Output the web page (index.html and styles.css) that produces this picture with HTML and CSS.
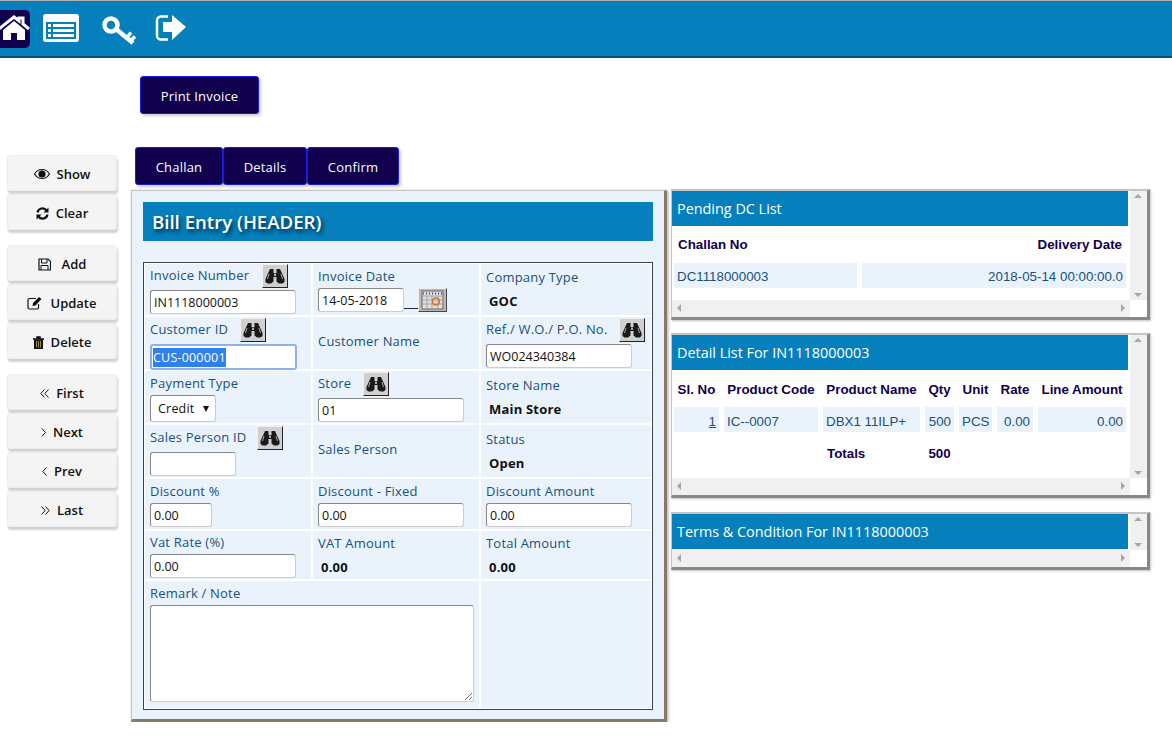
FILE: index.html
```html
<!DOCTYPE html>
<html lang="en">
  <head>
    <meta charset="UTF-8" />
    <title>Bill Entry</title>
    <link rel="stylesheet" href="styles.css">
  </head>
  <body>
    <svg class="sprite" width="0" height="0">
      <symbol id="bino" viewBox="0 0 20 16">
        <path d="M5 1 H8.500 V5 H11.500 V1 H15 L19.500 11 V14 L17.500 15.500 H14 L11.500 13.500 V9 H8.500 V13.500 L6 15.500 H2.500 L0.500 14 V11 Z" fill="#1a1a1a"/>
        <path d="M4 6 L2.500 11 M16 6 L17.500 11 M9.500 5.500 V8 M10.500 5.500 V8" stroke="#aaa" stroke-width="1" fill="none"/>
      </symbol>
    </svg>

    <header class="topbar">
      <a class="nav-icon active">
        <svg width="30" height="28" viewBox="0 0 30 28"><path d="M-1 14 L14 2 L19 6 V3 H23 V9 L29 14" fill="none" stroke="#fff" stroke-width="3"/><path d="M3 15 L14 6 L25 15 V25 H17 V18 H11 V25 H3 Z" fill="#fff"/></svg>
      </a>
      <a class="nav-icon list">
        <svg width="36" height="28" viewBox="0 0 36 28"><rect x="0" y="0" width="36" height="28" rx="3" fill="#fff"/><rect x="3" y="8" width="30" height="17" fill="#0580bc"/><path d="M5 10h3v3h-3zM5 15h3v3h-3zM5 20h3v3h-3zM10 10h21v3h-21zM10 15h21v3h-21zM10 20h21v3h-21z" fill="#fff"/></svg>
      </a>
      <a class="nav-icon key">
        <svg width="34" height="34" viewBox="0 0 34 34"><circle cx="9" cy="9" r="6.500" fill="none" stroke="#fff" stroke-width="4.500"/><path d="M14 13 L31 27" stroke="#fff" stroke-width="4.500" fill="none"/><path d="M25 21.500 L29 16.500 M29 24.500 L33 20.500" stroke="#fff" stroke-width="3.500" fill="none"/></svg>
      </a>
      <a class="nav-icon exit">
        <svg width="32" height="28" viewBox="0 0 32 28"><path d="M13 3.500 H6 A4 4 0 0 0 2 7.500 V22.500 A4 4 0 0 0 6 26.500 H13" fill="none" stroke="#fff" stroke-width="2.500"/><path d="M8 9 H17 V2 L31 14 L17 27 V19 H8 Z" fill="#fff"/></svg>
      </a>
    </header>

    <div class="print-row">
      <button class="dark-btn print-btn" type="button">Print Invoice</button>
    </div>

    <div class="page">
      <aside class="sidebar">
        <div class="btn-group">
          <button class="side-btn" type="button"><svg width="16" height="12" viewBox="0 0 16 12"><path d="M0.500 6 C4 0 12 0 15.500 6 C12 12 4 12 0.500 6 Z" fill="none" stroke="#111" stroke-width="1.200"/><circle cx="8" cy="6" r="3.600" fill="#111"/></svg>Show</button>
          <button class="side-btn" type="button"><svg width="13" height="13" viewBox="0 0 13 13"><path d="M1.500 5.500 A5 5 0 0 1 10.500 3.500 M11.500 7.500 A5 5 0 0 1 2.500 9.500" fill="none" stroke="#111" stroke-width="2.200"/><path d="M12.500 0.500 V5.500 H7.500 Z M0.500 12.500 V7.500 H5.500 Z" fill="#111"/></svg>Clear</button>
        </div>
        <div class="btn-group">
          <button class="side-btn wide" type="button"><svg width="13" height="13" viewBox="0 0 13 13"><path d="M1 1 H10 L12.500 3.500 V12 H1 Z" fill="none" stroke="#111" stroke-width="1.200"/><path d="M3.500 1 V5 H9 V1 M3 12 V7.500 H10 V12" fill="none" stroke="#111"/></svg>Add</button>
          <button class="side-btn" type="button"><svg width="16" height="14" viewBox="0 0 16 14"><path d="M9 2.500 H2.500 A1.500 1.500 0 0 0 1 4 V11.500 A1.500 1.500 0 0 0 2.500 13 H10 A1.500 1.500 0 0 0 11.500 11.500 V8" fill="none" stroke="#111" stroke-width="1.200"/><path d="M6 7 L12 1 L14.500 3 L8.500 9.500 L5.500 10 Z" fill="#111"/></svg>Update</button>
          <button class="side-btn" type="button"><svg width="11" height="13" viewBox="0 0 11 13"><path d="M0 2.500 H11 V3.500 H0 Z M3.500 2.500 V0.500 H7.500 V2.500" fill="#111" stroke="#111" stroke-width="0.600"/><path d="M1 3.500 H10 V13 H1 Z" fill="#111"/><path d="M3.500 5 V11.500 M5.500 5 V11.500 M7.500 5 V11.500" stroke="#c9a55c" stroke-width="0.800"/></svg>Delete</button>
        </div>
        <div class="btn-group">
          <button class="side-btn" type="button"><svg class="chev" width="9" height="9" viewBox="0 0 9 9"><path d="M4.500 0.500 L0.800 4.500 L4.500 8.500 M8.500 0.500 L4.800 4.500 L8.500 8.500" /></svg>First</button>
          <button class="side-btn" type="button"><svg class="chev" width="5" height="9" viewBox="0 0 5 9"><path d="M0.800 0.500 L4.500 4.500 L0.800 8.500" /></svg>Next</button>
          <button class="side-btn" type="button"><svg class="chev" width="5" height="9" viewBox="0 0 5 9"><path d="M4.500 0.500 L0.800 4.500 L4.500 8.500" /></svg>Prev</button>
          <button class="side-btn" type="button"><svg class="chev" width="9" height="9" viewBox="0 0 9 9"><path d="M0.500 0.500 L4.200 4.500 L0.500 8.500 M4.500 0.500 L8.200 4.500 L4.500 8.500" /></svg>Last</button>
        </div>
      </aside>

      <div class="content">
        <nav class="tabs">
          <button class="dark-btn tab" type="button">Challan</button>
          <button class="dark-btn tab" type="button">Details</button>
          <button class="dark-btn tab" type="button">Confirm</button>
        </nav>

        <div class="columns">
          <section class="form-panel">
            <h2 class="form-title">Bill Entry (HEADER)</h2>
            <div class="form-grid">
              <div class="cell">
                <div class="label-row"><label>Invoice Number</label><button class="find-btn" type="button"><svg width="20" height="16"><use href="#bino"/></svg></button></div>
                <input class="field w-146" type="text" value="IN1118000003" />
              </div>
              <div class="cell pad-3">
                <label>Invoice Date</label>
                <div class="date-row">
                  <input class="field w-86" type="text" value="14-05-2018" />
                  <span class="date-line"></span>
                  <button class="cal-btn" type="button"><svg width="25" height="20" viewBox="0 0 25 20"><rect x="2" y="1" width="21" height="18" fill="#ddd" stroke="#666"/><path d="M2 6h21M2 10h21M2 14h21M7 6v13M12 6v13M18 6v13" stroke="#999" stroke-width="0.800"/><path d="M3 3.500h19" stroke="#44a" stroke-dasharray="1 2" stroke-width="2"/><circle cx="16" cy="11.500" r="3.500" fill="none" stroke="#e07020" stroke-width="1.600"/></svg></button>
                </div>
              </div>
              <div class="cell pad-4">
                <label>Company Type</label>
                <div class="value">GOC</div>
              </div>

              <div class="cell pad-1">
                <div class="label-row tight"><label>Customer ID</label><button class="find-btn" type="button"><svg width="20" height="16"><use href="#bino"/></svg></button></div>
                <div class="field w-146 focused"><span class="selected">CUS-000001</span></div>
              </div>
              <div class="cell center"><label>Customer Name</label></div>
              <div class="cell pad-1">
                <div class="label-row spread"><label>Ref./ W.O./ P.O. No.</label><button class="find-btn" type="button"><svg width="20" height="16"><use href="#bino"/></svg></button></div>
                <input class="field w-146" type="text" value="WO024340384" />
              </div>

              <div class="cell pad-3">
                <label>Payment Type</label>
                <div class="field select-box"><span>Credit</span><span class="caret"></span></div>
              </div>
              <div class="cell pad-1">
                <div class="label-row tight"><label>Store</label><button class="find-btn" type="button"><svg width="20" height="16"><use href="#bino"/></svg></button></div>
                <input class="field w-146" type="text" value="01" />
              </div>
              <div class="cell pad-5">
                <label>Store Name</label>
                <div class="value">Main Store</div>
              </div>

              <div class="cell pad-1">
                <div class="label-row tighter"><label>Sales Person ID</label><button class="find-btn" type="button"><svg width="20" height="16"><use href="#bino"/></svg></button></div>
                <input class="field w-86" type="text" />
              </div>
              <div class="cell center"><label>Sales Person</label></div>
              <div class="cell pad-5">
                <label>Status</label>
                <div class="value">Open</div>
              </div>

              <div class="cell pad-3">
                <label>Discount %</label>
                <input class="field w-62" type="text" value="0.00" />
              </div>
              <div class="cell pad-3">
                <label>Discount - Fixed</label>
                <input class="field w-146" type="text" value="0.00" />
              </div>
              <div class="cell pad-3">
                <label>Discount Amount</label>
                <input class="field w-146" type="text" value="0.00" />
              </div>

              <div class="cell pad-2">
                <label>Vat Rate (%)</label>
                <input class="field w-146" type="text" value="0.00" />
              </div>
              <div class="cell pad-3">
                <label>VAT Amount</label>
                <div class="value">0.00</div>
              </div>
              <div class="cell pad-3">
                <label>Total Amount</label>
                <div class="value">0.00</div>
              </div>

              <div class="cell pad-3 span-2">
                <label>Remark / Note</label>
                <textarea class="field note"></textarea>
              </div>
              <div class="cell"></div>
            </div>
          </section>

          <div class="side-panels">
            <section class="list-panel h-pending">
              <div class="list-body">
                <h3 class="list-title">Pending DC List</h3>
                <table class="list-table pending">
                  <tr><th class="left">Challan No</th><th class="right">Delivery Date</th></tr>
                  <tr><td>DC1118000003</td><td class="right">2018-05-14 00:00:00.0</td></tr>
                </table>
              </div>
              <div class="vbar"><span class="arr up"></span><span class="arr down"></span></div>
              <div class="hbar"><span class="arr lf"></span><span class="arr rt"></span></div>
            </section>

            <section class="list-panel h-detail">
              <div class="list-body">
                <h3 class="list-title">Detail List For IN1118000003</h3>
                <table class="list-table detail">
                  <tr><th>Sl. No</th><th>Product Code</th><th>Product Name</th><th>Qty</th><th>Unit</th><th>Rate</th><th>Line Amount</th></tr>
                  <tr><td class="right"><a class="row-link">1</a></td><td>IC--0007</td><td>DBX1 11ILP+</td><td class="right">500</td><td>PCS</td><td class="right">0.00</td><td class="right">0.00</td></tr>
                  <tr class="totals"><th></th><th></th><th class="left">Totals</th><th>500</th><th></th><th></th><th></th></tr>
                </table>
              </div>
              <div class="vbar"><span class="arr up"></span><span class="arr down"></span></div>
              <div class="hbar"><span class="arr lf"></span><span class="arr rt"></span></div>
            </section>

            <section class="list-panel h-terms">
              <div class="list-body">
                <h3 class="list-title">Terms &amp; Condition For IN1118000003</h3>
              </div>
              <div class="vbar"><span class="arr up"></span><span class="arr down"></span></div>
              <div class="hbar"><span class="arr lf"></span><span class="arr rt"></span></div>
            </section>
          </div>
        </div>
      </div>
    </div>
  </body>
</html>
```

FILE: styles.css
```css
* {
  box-sizing: border-box;
}

body {
  margin: 0;
  background: #fff;
  font-family: "Open Sans", "Liberation Sans", sans-serif;
  font-size: 13px;
  color: #111;
  overflow: hidden;
}

button {
  font-family: inherit;
  cursor: pointer;
}

.sprite {
  position: absolute;
}

/* top bar */
.topbar {
  height: 58px;
  display: flex;
  align-items: flex-start;
  padding-top: 9px;
  background: #0580bc;
  border-top: 1px solid #b4b4b4;
  border-bottom: 2px solid #03507a;
}

.nav-icon {
  display: flex;
  align-items: center;
  justify-content: center;
  height: 38px;
}

.nav-icon.active {
  width: 30px;
  background: #10004e;
  border-radius: 0 5px 5px 0;
}

.nav-icon.list {
  margin: -1px 0 0 13px;
}

.nav-icon.key {
  margin: 4px 0 0 23px;
}

.nav-icon.exit {
  margin: -2px 0 0 19px;
}

.dark-btn {
  background: #10004e;
  color: #fff;
  border: 1px solid #1a1ae6;
  border-radius: 3px;
  font-size: 13px;
  letter-spacing: 0.2px;
  box-shadow: 2px 2px 3px rgba(0, 0, 0, 0.2);
}

.print-row {
  padding: 18px 0 0 140px;
}

.print-btn {
  width: 119px;
  height: 38px;
  padding-top: 3px;
}

/* left buttons */
.page {
  display: flex;
  margin-top: 33px;
}

.sidebar {
  width: 135px;
  flex: none;
  padding: 8px 0 0 7px;
}

.btn-group {
  display: flex;
  flex-direction: column;
  gap: 3px;
  margin-bottom: 15px;
}

.side-btn {
  width: 110px;
  height: 36px;
  display: flex;
  align-items: center;
  justify-content: center;
  gap: 7px;
  padding: 2px 0 0;
  background: #f4f4f4;
  border: 1px solid #ececec;
  border-radius: 3px;
  font-size: 13px;
  font-weight: 600;
  color: #111;
  box-shadow: 1px 3px 2px rgba(0, 0, 0, 0.18);
}

.side-btn.wide {
  gap: 11px;
}

.chev {
  fill: none;
  stroke: #111;
  stroke-width: 1;
}

/* tabs and columns */
.tabs {
  display: flex;
}

.tab {
  height: 38px;
  padding: 1px 0 0;
}

.tab:nth-child(1) {
  width: 88px;
}

.tab:nth-child(2) {
  width: 84px;
}

.tab:nth-child(3) {
  width: 92px;
}

.columns {
  display: flex;
  align-items: flex-start;
  margin: 5px 0 0 -4px;
}

/* form panel */
.form-panel {
  width: 536px;
  height: 532px;
  padding: 11px 11px 0;
  background: #eaf3fb;
  border-top: 1px solid #c4c4c4;
  border-left: 1px solid #c4c4c4;
  border-right: 3px solid #857a6c;
  border-bottom: 3px solid #857a6c;
  box-shadow: 1px 1px 3px rgba(0, 0, 0, 0.35);
}

.form-title {
  height: 39px;
  margin: 0 0 21px;
  padding-left: 9px;
  background: #0580bc;
  color: #fff;
  font-size: 18.600px;
  font-weight: 600;
  line-height: 40px;
  text-shadow: 2px 3px 4px #023;
}

.form-grid {
  display: grid;
  grid-template-columns: 166px 166px minmax(0, 1fr);
  grid-template-rows: 51px 52px 52px 52px 50px 48px 127px;
  gap: 2px;
  height: 448px;
  padding: 1px;
  background: #fff;
  border: 1px solid #444;
}

.cell {
  background: #eaf3fb;
  padding: 0 6px 0 5px;
  color: #18507f;
  letter-spacing: 0.2px;
}

.cell.pad-1 {
  padding-top: 1px;
}

.cell.pad-2 {
  padding-top: 2px;
}

.cell.pad-3 {
  padding-top: 3px;
}

.cell.pad-4 {
  padding-top: 4px;
}

.cell.pad-5 {
  padding-top: 5px;
}

.cell.center {
  display: flex;
  align-items: center;
  padding-bottom: 4px;
}

.span-2 {
  grid-column: span 2;
}

label {
  display: block;
  line-height: 18px;
  height: 18px;
  white-space: nowrap;
}

.label-row {
  display: flex;
  align-items: center;
  gap: 13px;
  height: 24px;
  margin-bottom: 2px;
}

.label-row.tight {
  gap: 12px;
}

.label-row.tighter {
  gap: 11px;
}

.label-row.spread {
  gap: 0;
  justify-content: space-between;
}

.label-row label {
  margin-top: -2px;
}

.find-btn {
  width: 26px;
  height: 24px;
  padding: 0;
  display: flex;
  align-items: center;
  justify-content: center;
  background: #d0d0d0;
  border: 1px solid;
  border-color: #f0f0f0 #222 #222 #f0f0f0;
}

.field {
  display: block;
  height: 24px;
  padding: 0 3px;
  background: #fff;
  border: 1px solid;
  border-color: #888 #ccc #ccc #888;
  border-radius: 3px;
  font-family: "Open Sans", "Liberation Sans", sans-serif;
  font-size: 12.500px;
  color: #111;
  outline: none;
  margin-top: 3px;
}

.label-row + .field {
  margin-top: 0;
}

.w-146 {
  width: 146px;
}

.w-86 {
  width: 86px;
}

.w-62 {
  width: 62px;
}

.field.focused {
  display: flex;
  align-items: center;
  width: 147px;
  height: 26px;
  border: 2px solid #8db1ea;
  padding: 0 1px;
}

.selected {
  background: #2f80ed;
  color: #fff;
  line-height: 19px;
}

.date-row {
  display: flex;
  align-items: flex-end;
}

.date-line {
  width: 14px;
  height: 1px;
  background: #224;
  margin-bottom: 3px;
}

.cal-btn {
  width: 29px;
  height: 24px;
  padding: 0;
  display: flex;
  align-items: center;
  justify-content: center;
  background: #bbb;
  border: 1px solid;
  border-color: #eee #444 #444 #eee;
}

.value {
  padding: 6px 0 0 3px;
  font-weight: 700;
  color: #111;
}

.select-box {
  width: 66px;
  height: 27px;
  display: flex;
  align-items: center;
  justify-content: space-between;
  padding: 0 6px 0 7px;
}

.caret {
  border-top: 6px solid #111;
  border-left: 3.500px solid transparent;
  border-right: 3.500px solid transparent;
}

.note {
  width: 324px;
  height: 97px;
  resize: both;
}

/* right panels */
.side-panels {
  display: flex;
  flex-direction: column;
  gap: 13px;
  width: 479px;
  margin: -1px 0 0 4px;
}

.list-panel {
  display: grid;
  grid-template-columns: 1fr 17px;
  grid-template-rows: 1fr 17px;
  background: #fff;
  border-top: 2px solid #c4c4c4;
  border-left: 1px solid #c4c4c4;
  border-right: 3px solid #888;
  border-bottom: 3px solid #888;
  box-shadow: 1px 1px 2px rgba(0, 0, 0, 0.25);
}

.h-pending {
  height: 131px;
}

.h-detail {
  height: 165px;
}

.h-terms {
  height: 58px;
  margin-top: 1px;
}

.list-body {
  min-width: 0;
  overflow: hidden;
}

.list-title {
  width: 456px;
  height: 35px;
  margin: 0;
  padding-left: 5px;
  background: #0580bc;
  color: #fff;
  font-size: 14.400px;
  font-weight: 400;
  line-height: 35px;
}

.vbar,
.hbar {
  position: relative;
  background: #f0f0f0;
}

.arr {
  position: absolute;
  border: 4px solid transparent;
}

.arr.up {
  top: 3px;
  left: 4px;
  border-top: 0;
  border-bottom-color: #a6a6a6;
}

.arr.down {
  bottom: 3px;
  left: 4px;
  border-bottom: 0;
  border-top-color: #a6a6a6;
}

.arr.lf {
  left: 5px;
  top: 4px;
  border-left: 0;
  border-right-color: #a6a6a6;
}

.arr.rt {
  right: 5px;
  top: 4px;
  border-right: 0;
  border-left-color: #a6a6a6;
}

.list-table {
  width: 462px;
  margin: 0 0 0 -3px;
  border-collapse: separate;
  border-spacing: 5px 0;
  font-family: "Liberation Sans", Arial, sans-serif;
  font-size: 13.330px;
  table-layout: fixed;
}

.list-table th {
  height: 37px;
  color: #10004e;
  font-weight: 700;
  text-align: center;
  padding: 0 4px;
  white-space: nowrap;
}

.detail th {
  padding: 1px 0 0;
}

.list-table td {
  height: 25px;
  padding: 2px 3px 0;
  background: #eaf3fb;
  color: #18507f;
  white-space: nowrap;
}

.detail td {
  padding-top: 3px;
}

.list-table .left {
  text-align: left;
}

.list-table .right {
  text-align: right;
}

.pending th:first-child {
  width: 183px;
}

.detail th:nth-child(1) {
  width: 45px;
}

.detail th:nth-child(2) {
  width: 94px;
}

.detail th:nth-child(3) {
  width: 97px;
}

.detail th:nth-child(4) {
  width: 29px;
}

.detail th:nth-child(5) {
  width: 33px;
}

.detail th:nth-child(6) {
  width: 36px;
}

.detail th:nth-child(7) {
  width: 88px;
}

.detail .totals th {
  height: 41px;
}

.detail .totals .left {
  padding-left: 4px;
}

.row-link {
  text-decoration: underline;
}
```
